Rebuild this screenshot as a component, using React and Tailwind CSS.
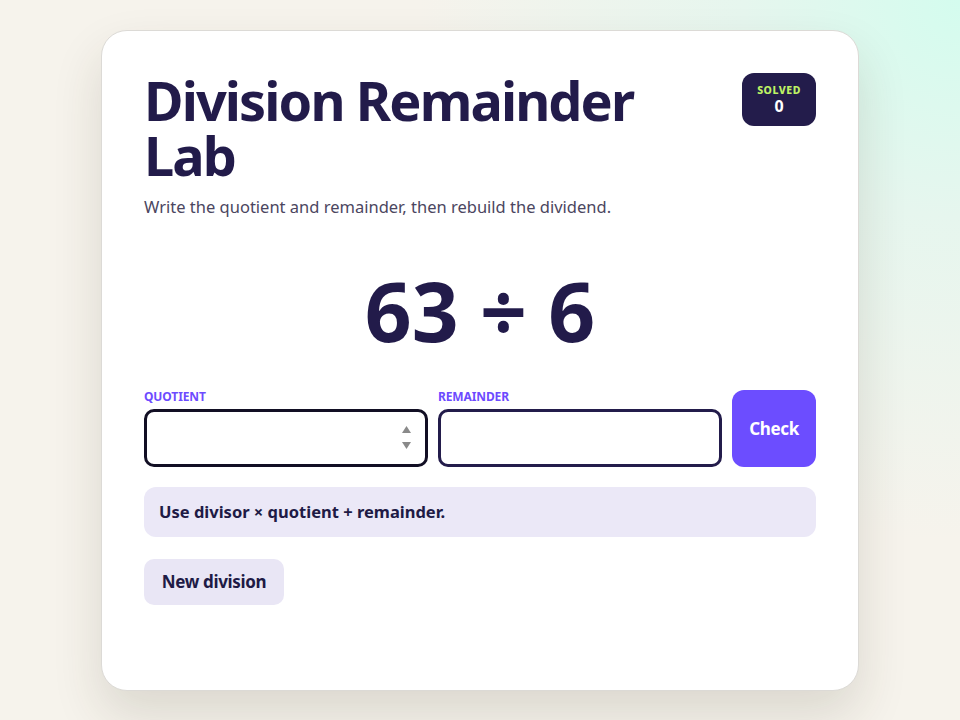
import React, { useState } from 'react';

const font = { fontFamily: '"Noto Sans", "Open Sans", sans-serif' };

const App = () => {
  const [solved] = useState(0);
  const [quotient, setQuotient] = useState('');
  const [remainder, setRemainder] = useState('');

  return (
    <div
      className="min-h-[720px] w-full bg-[#f6f3ec] bg-[radial-gradient(circle_at_100%_0%,#d4fcee_0%,#e6f6ee_18%,rgba(246,243,236,0)_45%)] pt-[30px] pb-[30px]"
      style={font}
    >
      <div className="mx-auto flex min-h-[661px] w-[758px] flex-col rounded-[26px] border border-[#dcdad6] bg-white px-[42px] pt-[42px] pb-[40px] shadow-[0_24px_50px_rgba(60,50,30,0.14)]">
        <div className="flex items-start justify-between">
          <h1 className="max-w-[540px] text-[54px] font-bold leading-[55px] tracking-[-0.035em] text-[#221b4a]">
            Division Remainder Lab
          </h1>
          <div className="flex h-[53px] w-[74px] flex-col items-center justify-center rounded-[12px] bg-[#231c4b]">
            <span className="text-[10.5px] font-extrabold leading-[12px] tracking-[0.05em] text-[#bef264]">SOLVED</span>
            <span className="text-[16px] font-bold leading-[20px] text-white">{solved}</span>
          </div>
        </div>

        <p className="mt-[12px] text-[16.5px] leading-[24px] text-[#4b4660]">
          Write the quotient and remainder, then rebuild the dividend.
        </p>

        <div className="mt-[41px] text-center text-[82px] font-bold leading-[100px] text-[#221b4a]">
          63 ÷ 6
        </div>

        <div className="mt-[30px] flex items-stretch gap-[10px]">
          <label className="flex flex-1 flex-col">
            <span className="mb-[5px] text-[12px] font-bold leading-[14px] tracking-[-0.01em] text-[#6d4bff]">QUOTIENT</span>
            <div className="relative">
              <input
                value={quotient}
                onChange={(e) => setQuotient(e.target.value)}
                className="h-[58px] w-full rounded-[10px] border-[3px] border-[#120f24] bg-white px-3 text-[20px] outline-none"
              />
              <span className="absolute right-[17px] top-[17px] flex flex-col gap-[9px] text-[#8a8a8a]">
                <svg width="9" height="7" viewBox="0 0 9 7"><path d="M4.5 0 L9 7 L0 7 Z" fill="currentColor" /></svg>
                <svg width="9" height="7" viewBox="0 0 9 7"><path d="M0 0 L9 0 L4.5 7 Z" fill="currentColor" /></svg>
              </span>
            </div>
          </label>
          <label className="flex flex-1 flex-col">
            <span className="mb-[5px] text-[12px] font-bold leading-[14px] tracking-[-0.01em] text-[#6d4bff]">REMAINDER</span>
            <input
              value={remainder}
              onChange={(e) => setRemainder(e.target.value)}
              className="h-[58px] w-full rounded-[10px] border-[3px] border-[#231c4b] bg-white px-3 text-[20px] outline-none"
            />
          </label>
          <button className="w-[84px] rounded-[12px] bg-[#6c4dff] text-[17px] font-bold tracking-[-0.02em] text-white">
            Check
          </button>
        </div>

        <div className="mt-[20px] flex h-[50px] items-center rounded-[12px] bg-[#ebe8f7] px-[15px] text-[16.5px] font-bold text-[#201a45]">
          Use divisor × quotient + remainder.
        </div>

        <div className="mt-[22px]">
          <button className="h-[46px] w-[140px] rounded-[10px] bg-[#e9e6f5] text-[17px] font-bold tracking-[-0.02em] text-[#201a45]">
            New division
          </button>
        </div>
      </div>
    </div>
  );
};

export default App;
